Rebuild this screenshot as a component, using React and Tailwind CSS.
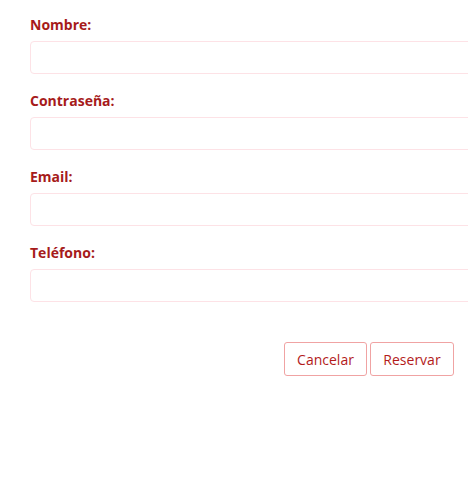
const fields = ["Nombre:", "Contraseña:", "Email:", "Teléfono:"];

export default function App() {
  return (
    <div
      className="w-[468px] h-[483px] overflow-hidden bg-white"
      style={{ fontFamily: '"Open Sans", sans-serif' }}
    >
      <form className="ml-[30px] w-[460px] pt-[15px]">
        {fields.map((label, i) => (
          <div key={label} className={i > 0 ? "mt-[17px]" : ""}>
            <label className="block text-[14px] leading-[20px] font-bold text-[#a61b1b] mb-[6px]">
              {label}
            </label>
            <input
              type={label === "Contraseña:" ? "password" : "text"}
              className="block w-full h-[33px] rounded-[4px] border border-[#fde2e6] outline-none px-2 text-sm"
            />
          </div>
        ))}
        <div className="w-[424px] flex justify-end gap-[3px] mt-[40px]">
          <button
            type="button"
            className="h-[34px] w-[83px] rounded-[3px] border border-[#f0a3a3] bg-white text-[14px] text-[#b31b1b]"
          >
            Cancelar
          </button>
          <button
            type="submit"
            className="h-[34px] w-[84px] rounded-[3px] border border-[#f0a3a3] bg-white text-[14px] text-[#b31b1b]"
          >
            Reservar
          </button>
        </div>
      </form>
    </div>
  );
}
